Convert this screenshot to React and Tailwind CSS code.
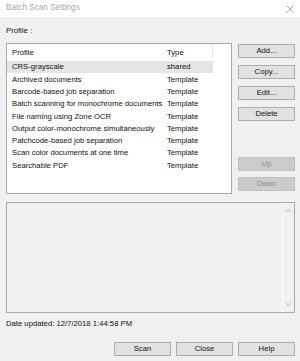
import React from 'react';

const profiles = [
  ['CRS-grayscale', 'shared'],
  ['Archived documents', 'Template'],
  ['Barcode-based job separation', 'Template'],
  ['Batch scanning for monochrome documents', 'Template'],
  ['File naming using Zone OCR', 'Template'],
  ['Output color-monochrome simultaneously', 'Template'],
  ['Patchcode-based job separation', 'Template'],
  ['Scan color documents at one time', 'Template'],
  ['Searchable PDF', 'Template'],
];

const Btn = ({ children, disabled }) => (
  <div
    className={`h-[14px] w-[57px] flex items-center justify-center border ${
      disabled ? 'bg-[#cccccc] border-[#bfbfbf] text-[#8a8a8a]' : 'bg-[#e1e1e1] border-[#adadad] text-[#111]'
    }`}
  >
    {children}
  </div>
);

export default function App() {
  return (
    <div
      className="w-[300px] h-[361px] bg-[#f0f0f0] text-[7.7px] text-[#111] overflow-hidden"
      style={{ fontFamily: '"Liberation Sans", Arial, sans-serif' }}
    >
      {/* title bar */}
      <div className="h-[17px] bg-white flex items-center justify-between pl-[6px] pr-[5px]">
        <span className="text-[#a8a8a8] text-[8.2px]">Batch Scan Settings</span>
        <svg width="8" height="8" viewBox="0 0 8 8" className="mr-[1px]">
          <path d="M0.5 0.5 L7.5 7.5 M7.5 0.5 L0.5 7.5" stroke="#9a9a9a" strokeWidth="0.8" />
        </svg>
      </div>

      <div className="pl-[6px] pr-[5px]">
        <div className="pt-[9px] h-[26px] leading-[10px]">Profile :</div>

        <div className="flex gap-[6px]">
          {/* list view */}
          <div className="w-[226px] h-[151px] bg-white border border-[#a9a9a9]">
            <div className="h-[17px] flex items-center relative">
              <span className="pl-[5px] w-[155px]">Profile</span>
              <span className="pl-[5px]">Type</span>
              <div className="absolute left-[205px] top-0 h-[14px] w-px bg-[#e5e5e5]" />
            </div>
            {profiles.map(([name, type], i) => (
              <div
                key={name}
                className={`h-[12.3px] w-[206px] flex items-center ${i === 0 ? 'bg-[#e5e5e5]' : ''}`}
              >
                <span className="pl-[5px] w-[155px] whitespace-nowrap">{name}</span>
                <span className="pl-[5px]">{type}</span>
              </div>
            ))}
          </div>

          {/* side buttons */}
          <div className="flex flex-col pt-[1px]">
            <div className="flex flex-col gap-[7px]">
              <Btn>Add...</Btn>
              <Btn>Copy...</Btn>
              <Btn>Edit...</Btn>
              <Btn>Delete</Btn>
            </div>
            <div className="flex flex-col gap-[6px] mt-[36px]">
              <Btn disabled>Up</Btn>
              <Btn disabled>Down</Btn>
            </div>
          </div>
        </div>

        {/* description box */}
        <div className="mt-[8px] h-[111px] w-[289px] border border-[#a9a9a9] flex">
          <div className="flex-1" />
          <div className="w-[12px] border-l border-[#fafafa] flex flex-col items-center justify-between py-[5px]">
            <svg width="7" height="5" viewBox="0 0 7 5">
              <path d="M1 4 L3.5 1.5 L6 4" stroke="#b5b5b5" strokeWidth="1" fill="none" />
            </svg>
            <svg width="7" height="5" viewBox="0 0 7 5">
              <path d="M1 1 L3.5 3.5 L6 1" stroke="#b5b5b5" strokeWidth="1" fill="none" />
            </svg>
          </div>
        </div>

        <div className="mt-[6px] leading-[10px]">Date updated: 12/7/2018 1:44:58 PM</div>

        <div className="mt-[13px] flex justify-end gap-[5px]">
          <Btn>Scan</Btn>
          <Btn>Close</Btn>
          <Btn>Help</Btn>
        </div>
      </div>
    </div>
  );
}
